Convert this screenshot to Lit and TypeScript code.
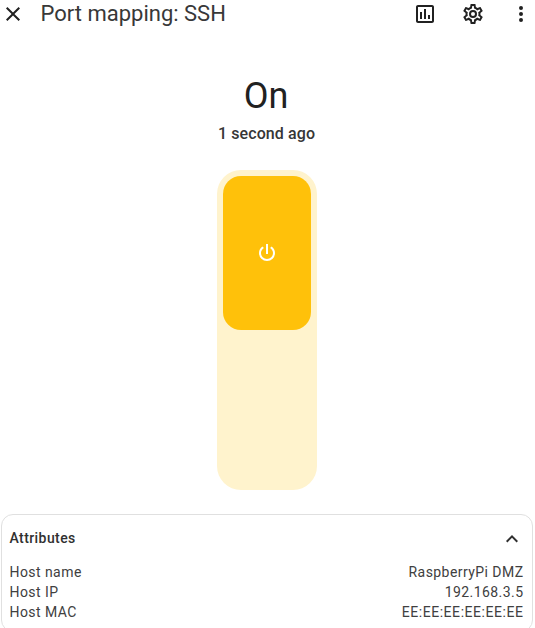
import { LitElement, html, css, svg } from "lit";
import { customElement } from "lit/decorators.js";

const ICONS = {
  close: "M19,6.41L17.59,5L12,10.59L6.41,5L5,6.41L10.59,12L5,17.59L6.41,19L12,13.41L17.59,19L19,17.59L13.41,12L19,6.41Z",
  chart: "M9 17H7V10H9V17M13 17H11V7H13V17M17 17H15V13H17V17M19 19H5V5H19V19.1M19 3H5C3.9 3 3 3.9 3 5V19C3 20.1 3.9 21 5 21H19C20.1 21 21 20.1 21 19V5C21 3.9 20.1 3 19 3Z",
  cog: "M12,8A4,4 0 0,1 16,12A4,4 0 0,1 12,16A4,4 0 0,1 8,12A4,4 0 0,1 12,8M12,10A2,2 0 0,0 10,12A2,2 0 0,0 12,14A2,2 0 0,0 14,12A2,2 0 0,0 12,10M10,22C9.75,22 9.54,21.82 9.5,21.58L9.13,18.93C8.5,18.68 7.96,18.34 7.44,17.94L4.95,18.95C4.73,19.03 4.46,18.95 4.34,18.73L2.34,15.27C2.21,15.05 2.27,14.78 2.46,14.63L4.57,12.97L4.5,12L4.57,11L2.46,9.37C2.27,9.22 2.21,8.95 2.34,8.73L4.34,5.27C4.46,5.05 4.73,4.96 4.95,5.05L7.44,6.05C7.96,5.66 8.5,5.32 9.13,5.07L9.5,2.42C9.54,2.18 9.75,2 10,2H14C14.25,2 14.46,2.18 14.5,2.42L14.87,5.07C15.5,5.32 16.04,5.66 16.56,6.05L19.05,5.05C19.27,4.96 19.54,5.05 19.66,5.27L21.66,8.73C21.79,8.95 21.73,9.22 21.54,9.37L19.43,11L19.5,12L19.43,13L21.54,14.63C21.73,14.78 21.79,15.05 21.66,15.27L19.66,18.73C19.54,18.95 19.27,19.04 19.05,18.95L16.56,17.95C16.04,18.34 15.5,18.68 14.87,18.93L14.5,21.58C14.46,21.82 14.25,22 14,22H10M11.25,4L10.88,6.61C9.68,6.86 8.62,7.5 7.85,8.39L5.44,7.35L4.69,8.65L6.8,10.2C6.4,11.37 6.4,12.64 6.8,13.8L4.68,15.36L5.43,16.66L7.86,15.62C8.63,16.5 9.68,17.14 10.87,17.38L11.24,20H12.76L13.13,17.39C14.32,17.14 15.37,16.5 16.14,15.62L18.57,16.66L19.32,15.36L17.2,13.81C17.6,12.64 17.6,11.37 17.2,10.2L19.31,8.65L18.56,7.35L16.15,8.39C15.38,7.5 14.32,6.86 13.12,6.62L12.75,4H11.25Z",
  dots: "M12,16A2,2 0 0,1 14,18A2,2 0 0,1 12,20A2,2 0 0,1 10,18A2,2 0 0,1 12,16M12,10A2,2 0 0,1 14,12A2,2 0 0,1 12,14A2,2 0 0,1 10,12A2,2 0 0,1 12,10M12,4A2,2 0 0,1 14,6A2,2 0 0,1 12,8A2,2 0 0,1 10,6A2,2 0 0,1 12,4Z",
  power: "M16.56,5.44L15.11,6.89C16.84,7.94 18,9.83 18,12A6,6 0 0,1 12,18A6,6 0 0,1 6,12C6,9.83 7.16,7.94 8.88,6.88L7.44,5.44C5.36,6.88 4,9.28 4,12A8,8 0 0,0 12,20A8,8 0 0,0 20,12C20,9.28 18.64,6.88 16.56,5.44M13,3H11V13H13",
  up: "M7.41,15.41L12,10.83L16.59,15.41L18,14L12,8L6,14L7.41,15.41Z",
};

const icon = (name: keyof typeof ICONS) =>
  html`<svg width="24" height="24" viewBox="0 0 24 24" fill="currentColor">${svg`<path d=${ICONS[name]}></path>`}</svg>`;

const ATTRIBUTES = [
  { label: "Host name", value: "RaspberryPi DMZ", kind: "text" },
  { label: "Host IP", value: "192.168.3.5", kind: "text" },
  { label: "Host MAC", value: "EE:EE:EE:EE:EE:EE", kind: "mac" },
];

@customElement("app-root")
export class AppRoot extends LitElement {
  static styles = css`
    :host {
      display: flex;
      flex-direction: column;
      box-sizing: border-box;
      height: 628px;
      overflow: hidden;
      background: #fff;
      color: #212121;
      font-family: Roboto, sans-serif;
    }
    :host > * { flex: none; }
    svg { display: block; flex: none; }
    header {
      display: flex;
      align-items: center;
      height: 28px;
      padding: 0 2px 0 1px;
    }
    h1 {
      flex: 1;
      margin: 0 0 0 15.5px;
      font-size: 22px;
      line-height: 28px;
      font-weight: 400;
      color: #383838;
    }
    nav { display: flex; gap: 24px; }
    .state {
      margin: 46px 3px 0 0;
      text-align: center;
      font-size: 36px;
      line-height: 44px;
    }
    .changed {
      margin: 4px 2px 0 0;
      text-align: center;
      font-size: 16px;
      line-height: 24px;
      font-weight: 500;
      letter-spacing: 0.1px;
      color: #363636;
    }
    .track {
      box-sizing: border-box;
      width: 100px;
      height: 320px;
      margin: 24px 0 0 217px;
      padding: 6px;
      border-radius: 24px;
      background: #fff3cd;
    }
    .thumb {
      display: flex;
      align-items: center;
      justify-content: center;
      height: 154px;
      border-radius: 18px;
      background: #ffc10a;
      color: #fff;
    }
    .card {
      box-sizing: border-box;
      height: 118px;
      margin: 24px 2px 0 1px;
      padding: 0 8px 0 7.5px;
      border: 1px solid #e0e0e0;
      border-radius: 12px;
    }
    .heading {
      display: flex;
      align-items: center;
      justify-content: space-between;
      height: 47px;
      font-size: 14px;
      line-height: 18px;
      font-weight: 500;
      letter-spacing: 0.42px;
      color: #303030;
    }
    .heading span { padding-bottom: 2px; }
    .row {
      display: flex;
      justify-content: space-between;
      font-size: 14px;
      line-height: 20px;
      letter-spacing: 0.44px;
      padding-right: 0.5px;
      color: #404040;
    }
    .mac { letter-spacing: 0.55px; }
  `;

  render() {
    return html`
      <header>
        ${icon("close")}
        <h1>Port mapping: SSH</h1>
        <nav>${icon("chart")}${icon("cog")}${icon("dots")}</nav>
      </header>
      <div class="state">On</div>
      <div class="changed">1 second ago</div>
      <div class="track"><div class="thumb">${icon("power")}</div></div>
      <section class="card">
        <div class="heading"><span>Attributes</span>${icon("up")}</div>
        ${ATTRIBUTES.map(
          ({ label, value, kind }) =>
            html`<div class="row"><span>${label}</span><span class=${kind}>${value}</span></div>`,
        )}
      </section>
    `;
  }
}
